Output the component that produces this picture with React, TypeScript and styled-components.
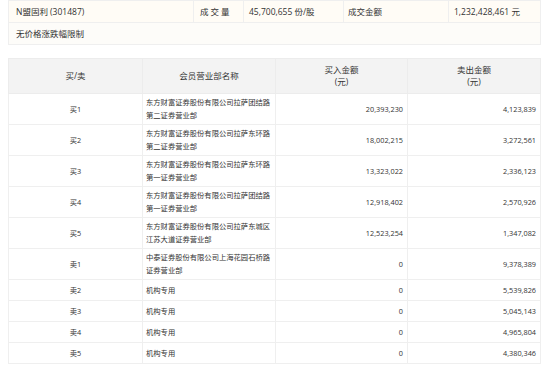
import React from "react";
import styled, { createGlobalStyle } from "styled-components";

const Global = createGlobalStyle`
  html, body { margin: 0; padding: 0; background: #fff; }
  body { padding: 0 8px; font-family: "Open Sans", "Noto Sans CJK SC", sans-serif; color: #333; }
`;

const InfoTable = styled.table`
  width: 532px;
  border-collapse: collapse;
  table-layout: fixed;
  background: #fdfcf9;
  border: 1px solid #efefef;
  border-top: none;
`;

const InfoRow = styled.tr<{ $h: number; $bg?: string }>`
  height: ${(p) => p.$h}px;
  background: ${(p) => p.$bg || "transparent"};
`;

const InfoCell = styled.td<{ $spaced?: boolean; $pl?: number }>`
  border: 1px solid #efefef;
  padding: 0 0 0 ${(p) => p.$pl ?? 5}px;
  font-size: 8.5px;
  line-height: 12px;
  color: #333;
  white-space: nowrap;
  letter-spacing: ${(p) => (p.$spaced ? "2px" : "0")};
  vertical-align: middle;
`;

const DataTable = styled.table`
  width: 532px;
  margin-top: 13px;
  border-collapse: collapse;
  table-layout: fixed;
  border: 1px solid #efefef;
`;

const HeadRow = styled.tr`
  height: 35px;
  background: #f3f3f3;
`;

const HeadCell = styled.th`
  border: 1px solid #ececec;
  font-weight: normal;
  font-size: 8.5px;
  line-height: 12px;
  color: #333;
  text-align: center;
  vertical-align: middle;
  padding: 0;
`;

const BodyRow = styled.tr<{ $h: number }>`
  height: ${(p) => p.$h}px;
  background: #fff;
`;

const Cell = styled.td<{ $align: "left" | "center" | "right" }>`
  border: 1px solid #efefef;
  font-size: 7.3px;
  line-height: 13px;
  color: #333;
  white-space: nowrap;
  overflow: visible;
  text-align: ${(p) => p.$align};
  vertical-align: middle;
  padding: ${(p) => (p.$align === "left" ? "0 0 0 3px" : p.$align === "right" ? "0 4px 0 0" : "0")};
`;

type Row = { side: string; name: string[]; buy: string; sell: string };

const rows: Row[] = [
  { side: "买1", name: ["东方财富证券股份有限公司拉萨团结路", "第二证券营业部"], buy: "20,393,230", sell: "4,123,839" },
  { side: "买2", name: ["东方财富证券股份有限公司拉萨东环路", "第二证券营业部"], buy: "18,002,215", sell: "3,272,561" },
  { side: "买3", name: ["东方财富证券股份有限公司拉萨东环路", "第一证券营业部"], buy: "13,323,022", sell: "2,336,123" },
  { side: "买4", name: ["东方财富证券股份有限公司拉萨团结路", "第一证券营业部"], buy: "12,918,402", sell: "2,570,926" },
  { side: "买5", name: ["东方财富证券股份有限公司拉萨东城区", "江苏大道证券营业部"], buy: "12,523,254", sell: "1,347,082" },
  { side: "卖1", name: ["中泰证券股份有限公司上海花园石桥路", "证券营业部"], buy: "0", sell: "9,378,389" },
  { side: "卖2", name: ["机构专用"], buy: "0", sell: "5,539,826" },
  { side: "卖3", name: ["机构专用"], buy: "0", sell: "5,045,143" },
  { side: "卖4", name: ["机构专用"], buy: "0", sell: "4,965,804" },
  { side: "卖5", name: ["机构专用"], buy: "0", sell: "4,380,346" },
];

export default function App() {
  return (
    <>
      <Global />
      <InfoTable>
        <colgroup>
          <col style={{ width: 185 }} />
          <col style={{ width: 50 }} />
          <col style={{ width: 100 }} />
          <col style={{ width: 105 }} />
          <col style={{ width: 92 }} />
        </colgroup>
        <tbody>
          <InfoRow $h={22} $bg="#fffcf6">
            <InfoCell $pl={7}>N盟固利 (301487)</InfoCell>
            <InfoCell $spaced $pl={6}>成交量</InfoCell>
            <InfoCell>45,700,655 份/股</InfoCell>
            <InfoCell $pl={4}>成交金额</InfoCell>
            <InfoCell>1,232,428,461 元</InfoCell>
          </InfoRow>
          <InfoRow $h={22}>
            <InfoCell $pl={7} colSpan={5}>无价格涨跌幅限制</InfoCell>
          </InfoRow>
        </tbody>
      </InfoTable>
      <DataTable>
        <colgroup>
          <col style={{ width: 134 }} />
          <col style={{ width: 133 }} />
          <col style={{ width: 132 }} />
          <col style={{ width: 133 }} />
        </colgroup>
        <thead>
          <HeadRow>
            <HeadCell>买/卖</HeadCell>
            <HeadCell>会员营业部名称</HeadCell>
            <HeadCell>
              买入金额
              <br />
              (元)
            </HeadCell>
            <HeadCell>
              卖出金额
              <br />
              (元)
            </HeadCell>
          </HeadRow>
        </thead>
        <tbody>
          {rows.map((r) => (
            <BodyRow key={r.side} $h={r.name.length > 1 ? 31 : 21}>
              <Cell $align="center">{r.side}</Cell>
              <Cell $align="left">
                {r.name.map((n, i) => (
                  <React.Fragment key={i}>
                    {i > 0 && <br />}
                    {n}
                  </React.Fragment>
                ))}
              </Cell>
              <Cell $align="right">{r.buy}</Cell>
              <Cell $align="right">{r.sell}</Cell>
            </BodyRow>
          ))}
        </tbody>
      </DataTable>
    </>
  );
}
